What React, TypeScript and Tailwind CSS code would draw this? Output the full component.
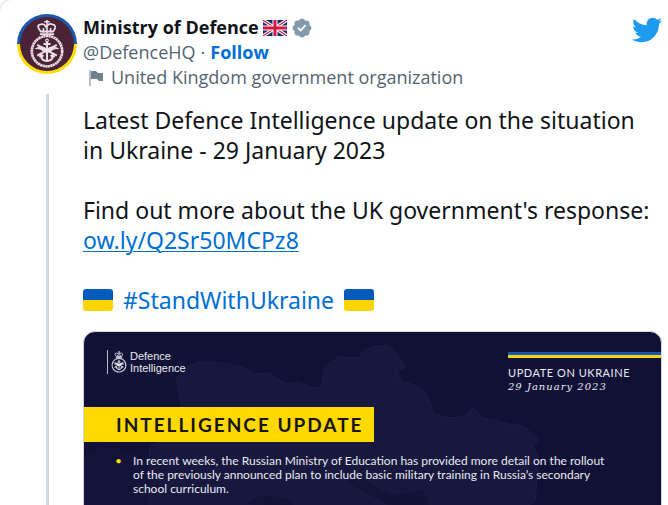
import React from "react";
import { FaTwitter } from "react-icons/fa";

function Emblem({ className }: { className?: string }) {
  return (
    <svg viewBox="0 0 40 56" className={className} fill="none" stroke="currentColor" aria-hidden="true">
      <path d="M12 17h16M13 14q-6-7 0-8q4-1 6 3q3-5 7-3q6 1 1 8z" strokeWidth="2" />
      <path d="M20 1v15M17 3h6M16 10v5M24 10v5" strokeWidth="1.800" />
      <circle cx="20" cy="36" r="17" strokeWidth="3" strokeDasharray="2.500 .4" />
      <path d="M20 25v22M16 28h8M13 41q1 6 7 6t7-6M12 43l1-3 3 2M28 43l-1-3-3 2" strokeWidth="2.400" />
      <path d="M9 29l22 12M31 29L9 41" strokeWidth="2.400" />
      <path d="M8 33q6-4 12 1q6-5 12-1q-6 0-9 4h-6q-3-4-9-4z" fill="currentColor" strokeWidth="1.200" />
      <circle cx="20" cy="24" r="1.500" strokeWidth="1.200" />
    </svg>
  );
}

function Avatar() {
  return (
    <a href="#profile" aria-label="Ministry of Defence profile" className="block size-15 shrink-0 rounded-full bg-linear-to-b from-[#1d57ad] from-50% to-[#fddc05] to-50% p-[3px]">
      <span className="flex size-full items-center justify-center rounded-full bg-[#4c2236] text-[#eadfe4]">
        <Emblem className="h-[50px] w-[36px]" />
      </span>
    </a>
  );
}

function UnionFlag() {
  return (
    <svg viewBox="0 0 24 16" className="h-4 w-6 shrink-0" role="img" aria-label="United Kingdom">
      <rect width="24" height="16" rx="1" fill="#0b2b7c" />
      <path d="M0 0l24 16M24 0L0 16" stroke="#fff" strokeWidth="3.400" />
      <path d="M0 0l24 16M24 0L0 16" stroke="#d3173a" strokeWidth="1.200" />
      <path d="M12 0v16M0 8h24" stroke="#fff" strokeWidth="5" />
      <path d="M12 0v16M0 8h24" stroke="#d3173a" strokeWidth="3" />
    </svg>
  );
}

function UkraineFlag() {
  return (
    <span role="img" aria-label="Ukraine" className="h-[22px] w-[30px] rounded-[3px] bg-linear-to-b from-[#005bbb] from-50% to-[#ffd500] to-50%" />
  );
}

function Verified() {
  return (
    <svg viewBox="0 0 24 24" className="size-[22px] shrink-0 fill-[#829aab]" role="img" aria-label="Verified account">
      <path d="M22.25 12c0-1.43-.88-2.67-2.19-3.34.46-1.39.2-2.9-.81-3.91s-2.52-1.27-3.91-.81c-.66-1.31-1.91-2.19-3.34-2.19s-2.67.88-3.33 2.19c-1.4-.46-2.91-.2-3.92.81s-1.26 2.52-.8 3.91c-1.31.67-2.2 1.91-2.2 3.34s.89 2.67 2.2 3.34c-.46 1.39-.21 2.9.8 3.91s2.52 1.26 3.91.81c.67 1.31 1.91 2.19 3.34 2.19s2.68-.88 3.34-2.19c1.39.45 2.9.2 3.91-.81s1.27-2.52.81-3.91c1.31-.67 2.19-1.91 2.19-3.34zm-11.71 4.2L6.8 12.46l1.41-1.42 2.26 2.26 4.8-5.23 1.47 1.36-6.2 6.77z" />
    </svg>
  );
}

function UkraineMap() {
  return (
    <svg viewBox="0 0 578 200" className="absolute inset-x-0 top-0 w-full" aria-hidden="true">
      <path
        d="M98 78L92 46L103 35L115 30L140 31L160 36L172 42L185 41L203 52L215 50L226 55L238 56L241 35L255 25L276 26L280 18L294 14L305 13L314 22L322 35L314 40L318 50L328 52L340 58L346 68L350 82L366 86L380 85L390 76L400 86L410 88L424 92L440 94L455 108L450 114L455 125L452 170L430 180L400 200H62L66 114L90 106Z"
        fill="#18183e"
        stroke="#1d1d45"
        strokeWidth="1"
      />
      <path d="M0 124l16-8 26 2 18 12 8 14-8 56H0z" fill="#14143a" />
      <path d="M160 172l18-8 24 2 10 9zM262 150l14-4 18 10 16 8 30-6 6 16h-40z" fill="#131336" />
    </svg>
  );
}

function MediaCard() {
  return (
    <section className="relative overflow-hidden rounded-xl border border-[#cfd9de] bg-[#111136] text-[#e9e9f1]">
      <UkraineMap />
      <div className="relative pb-8">
        <header className="flex justify-between pt-[18px] pl-[23px]">
          <div className="flex h-6 items-center gap-[3px] border-l border-[#b9b9ca] pl-[3px]">
            <Emblem className="h-6 w-4" />
            <p className="font-['Liberation_Sans',Arial,sans-serif] text-[11px] leading-3">
              Defence
              <br />
              Intelligence
            </p>
          </div>
          <div className="w-[153px] pt-[2px]">
            <div className="h-[6px] bg-linear-to-b from-[#1757b4] from-50% to-[#f8d40b] to-50%" />
            <p className="pt-2 font-[Lato,sans-serif] text-[11px] leading-[14px] tracking-wider">UPDATE ON UKRAINE</p>
            <p className="font-['DejaVu_Serif',serif] text-[10px] leading-[13px] tracking-widest italic">29 January 2023</p>
          </div>
        </header>
        <h2 className="mt-[14px] w-fit bg-[#ffd900] pr-[10px] pl-8 font-[Lato,sans-serif] text-[19px] leading-[35px] font-bold tracking-[2px] text-[#17150b]">
          INTELLIGENCE UPDATE
        </h2>
        <ul className="mt-3 pr-11 pl-[31px] font-[Lato,sans-serif] text-[12px] leading-[14px]">
          <li className="flex">
            <span className="w-[18px] shrink-0 text-[#ffd900]">•</span>
            <span>
              In recent weeks, the Russian Ministry of Education has provided more detail on the rollout
              of the previously announced plan to include basic military training in Russia’s secondary
              school curriculum.
            </span>
          </li>
        </ul>
      </div>
    </section>
  );
}

export default function App() {
  return (
    <main className="h-screen overflow-hidden bg-white font-['Open_Sans','Noto_Sans',sans-serif]">
      <article className="-mx-px -mt-px flex rounded-tl-xl border border-[#cfd9de] pt-[14px] pr-[6px] pl-[17px] text-[#0f1419]">
        <div className="flex w-[66px] shrink-0 flex-col">
          <Avatar />
          <div className="mt-5 ml-[29px] w-[3px] grow bg-[#cfd9de]" />
        </div>
        <div className="min-w-0 grow">
          <header className="flex items-start justify-between pt-px">
            <div className="text-[18px] leading-[25px]">
              <a href="#profile" className="flex items-center gap-1 font-bold">
                Ministry of Defence
                <UnionFlag />
                <Verified />
              </a>
              <div className="flex gap-[5px] text-[#536471]">
                <a href="#profile">@DefenceHQ</a>
                <span>·</span>
                <a href="#follow" className="font-bold text-[#006fd6]">Follow</a>
              </div>
              <div className="flex items-center gap-2 pl-[6px] text-[#536471]">
                <svg viewBox="0 0 14 16" className="h-4 w-[14px]" aria-hidden="true">
                  <path d="M0 0h2v16H0z" fill="#b4c1ca" />
                  <path d="M2 1h5q1 2 3 2h4v8h-3q-2 0-3-2H2z" fill="#6d818f" />
                </svg>
                United Kingdom government organization
              </div>
            </div>
            <a href="#tweet" aria-label="View on Twitter" className="text-[#1d9bf0]">
              <FaTwitter className="size-[30px]" />
            </a>
          </header>
          <div className="mt-[15px] font-['Noto_Sans',sans-serif] text-[23px] leading-[30px]">
            <p>
              Latest Defence Intelligence update on the situation
              <br />
              in Ukraine - 29 January 2023
            </p>
            <p className="mt-[30px]">
              Find out more about the UK government's response:
              <br />
              <a href="#response" className="text-[#006fd6] underline decoration-1 underline-offset-2">ow.ly/Q2Sr50MCPz8</a>
            </p>
            <p className="mt-[30px] mb-4 flex items-center gap-[10px]">
              <UkraineFlag />
              <a href="#StandWithUkraine" className="text-[#006fd6]">#StandWithUkraine</a>
              <UkraineFlag />
            </p>
          </div>
          <MediaCard />
        </div>
      </article>
    </main>
  );
}
